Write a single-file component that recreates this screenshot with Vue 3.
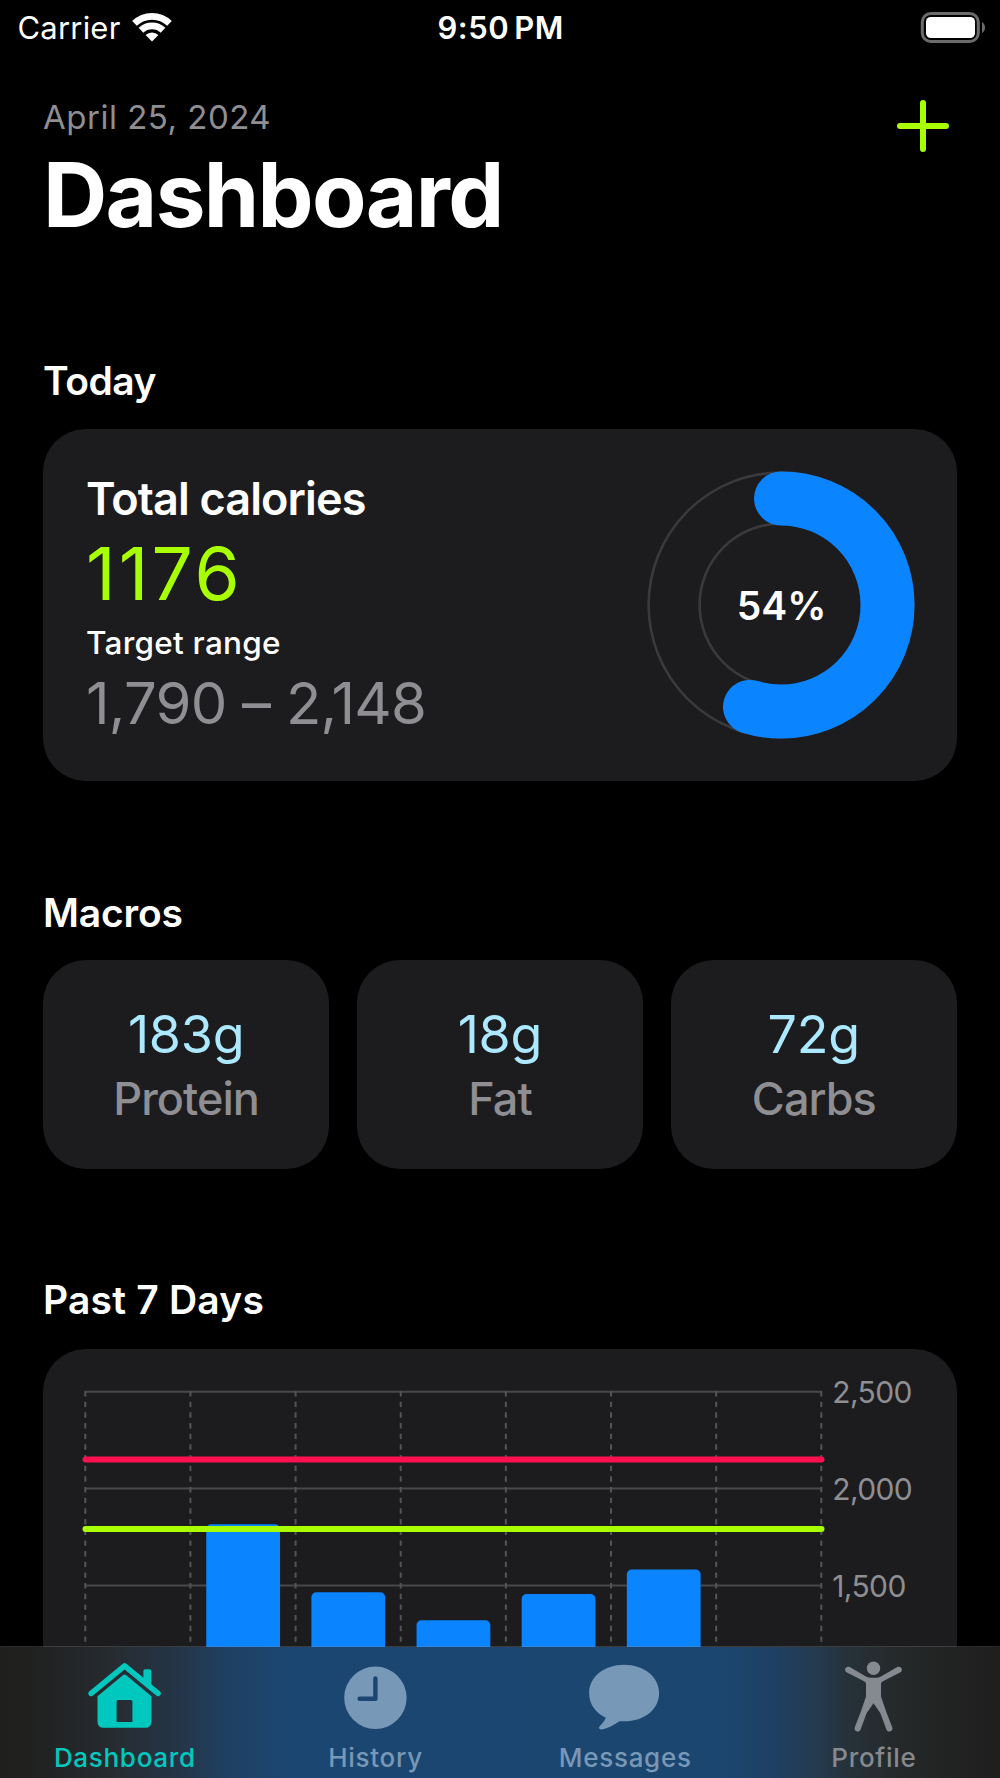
<script setup>
const macros = [
  { value: '183g', label: 'Protein' },
  { value: '18g', label: 'Fat' },
  { value: '72g', label: 'Carbs' },
]

// Chart geometry, in the chart's own coordinate space
const plotWidth = 736
const columns = 7
const step = plotWidth / columns
const gridX = Array.from({ length: columns + 1 }, (_, i) => 42.3 + i * step)
const gridY = [42.7, 139.6, 236.5]
const bars = [
  { day: 1, top: 175.3 },
  { day: 2, top: 243.3 },
  { day: 3, top: 271.3 },
  { day: 4, top: 245 },
  { day: 5, top: 220.6 },
].map((b) => ({ ...b, x: 42.3 + b.day * step + 15.8 }))
const yLabels = ['2,500', '2,000', '1,500']
</script>

<template>
  <div class="screen">
    <header class="status">
      <div class="carrier">
        <span class="carrier-name">Carrier</span>
        <svg class="wifi" width="40" height="30" viewBox="0 0 40 30">
          <g fill="none" stroke="#fff" stroke-width="6.7">
            <path d="M2.5 11.4A25.2 25.2 0 0 1 37.5 11.4" />
            <path d="M9 18.3A16 16 0 0 1 31 18.3" />
          </g>
          <path d="M20 29.5L13.6 23.100A9.3 9.3 0 0 1 26.4 23.100Z" fill="#fff" />
        </svg>
      </div>
      <div class="time">9:50<span class="pm">PM</span></div>
      <div class="power">
        <svg width="66" height="32" viewBox="0 0 66 32">
          <rect x="2.3" y="1.5" width="56" height="28" rx="8.5" fill="none" stroke="#6b6b6b" stroke-width="3" />
          <rect x="6" y="4.9" width="49" height="21.2" rx="4.8" fill="#fff" />
          <path d="M62 10Q65 12 65 15.5T62 21Z" fill="#6b6b6b" />
        </svg>
      </div>
    </header>

    <main class="content">
      <div class="top">
        <div>
          <p class="date">April 25, 2024</p>
          <h1 class="title">Dashboard</h1>
        </div>
        <svg class="plus" width="52" height="52" viewBox="0 0 52 52">
          <path d="M26 3V49M3 26H49" stroke="#a8ff00" stroke-width="6" stroke-linecap="round" />
        </svg>
      </div>

      <h2 class="heading today">Today</h2>
      <section class="card summary">
        <div class="figures">
          <div class="total-label">Total calories</div>
          <div class="total">1176</div>
          <div class="range-label">Target range</div>
          <div class="range">1,790 – 2,148</div>
        </div>
        <div class="ring">
          <svg width="268" height="268" viewBox="0 0 268 268">
            <g fill="none">
              <circle cx="134" cy="134" r="132.4" stroke="#3a3a3c" stroke-width="2.6" />
              <circle cx="134" cy="134" r="81.4" stroke="#3a3a3c" stroke-width="2.6" />
              <circle
                cx="134" cy="134" r="106.5" stroke="#0a84ff" stroke-width="54" stroke-linecap="round"
                pathLength="100" stroke-dasharray="54.7 100" transform="rotate(-90 134 134)"
              />
            </g>
          </svg>
          <span class="percent">54%</span>
        </div>
      </section>

      <h2 class="heading macros-heading">Macros</h2>
      <section class="macros">
        <div v-for="m in macros" :key="m.label" class="card macro">
          <div class="macro-value">{{ m.value }}</div>
          <div class="macro-label">{{ m.label }}</div>
        </div>
      </section>

      <h2 class="heading week-heading">Past 7 Days</h2>
      <section class="card week">
        <svg class="plot" width="790" height="429" viewBox="0 0 790 429">
          <g stroke-width="2">
            <line v-for="y in gridY" :key="y" x1="42" x2="779" :y1="y" :y2="y" stroke="#48484a" />
            <line v-for="x in gridX" :key="x" :x1="x" :x2="x" y1="42" y2="429" stroke="#545457" stroke-dasharray="5.4 5.27" />
          </g>
          <rect v-for="b in bars" :key="b.day" :x="b.x" :y="b.top" width="73.8" height="300" rx="5" fill="#0a84ff" />
          <g stroke-width="6" stroke-linecap="round">
            <line x1="42.5" x2="778.5" y1="110.5" y2="110.5" stroke="#ff114f" />
            <line x1="42.5" x2="778.5" y1="180" y2="180" stroke="#a8ff00" />
          </g>
        </svg>
        <div class="axis">
          <span v-for="l in yLabels" :key="l">{{ l }}</span>
        </div>
      </section>
    </main>

    <nav class="tabs">
      <div class="tab active">
        <svg width="76" height="72" viewBox="0.6 0 76 72">
          <g fill="none" stroke="#00c8be" stroke-width="5.6" stroke-linecap="round" stroke-linejoin="round">
            <path d="M4.8 32.4L38.2 4.800L71.6 32.4" />
          </g>
          <path d="M57 22V10.2Q57 8.3 58.9 8.3H63Q64.9 8.3 64.9 10.2V28Z" fill="#00c8be" />
          <path
            fill-rule="evenodd" fill="#00c8be"
            d="M36.5 14.2Q38.2 12.8 39.9 14.2L65 35.2V60.5Q65 66.8 58.7 66.8H17.4Q11.1 66.8 11.1 60.5V35.2ZM30.2 40.5V61H46V40.5Q46 39 44.5 39H31.7Q30.2 39 30.2 40.5Z"
          />
        </svg>
        <span>Dashboard</span>
      </div>
      <div class="tab">
        <svg width="76" height="72" viewBox="0 0 76 72">
          <circle cx="38.4" cy="36.8" r="31.2" fill="#7898b8" />
          <path d="M38.4 17.5V37.8H22.6" fill="none" stroke="#1b4670" stroke-width="4.4" stroke-linecap="round" stroke-linejoin="round" />
        </svg>
        <span class="nudge">History</span>
      </div>
      <div class="tab">
        <svg width="76" height="72" viewBox="-0.5 -0.4 76 72">
          <path
            fill="#7898b8"
            d="M37.6 3.3C57.4 3.3 72.6 15.5 72.6 31.5S58.4 59.8 37.6 59.8H32.9C27.6 63.6 20.9 67 15.6 68C12.7 68.5 11.7 66.5 13.4 64.7C15.9 62 18.2 59.2 19.3 56.3C9.2 51.3 2.6 42.7 2.6 31.5C2.6 15.5 17.8 3.3 37.6 3.3Z"
          />
        </svg>
        <span class="nudge">Messages</span>
      </div>
      <div class="tab person">
        <svg width="76" height="72" viewBox="1 0 76 72">
          <circle cx="38.5" cy="7.3" r="6.7" fill="#858a90" />
          <path
            fill="#858a90"
            d="M14.7 6L31 15.5Q33.5 16.8 36 16.8H41Q43.500 16.8 46 15.5L62.3 6C66.5 4.2 68.7 9.5 65 11.6L47.5 20.6Q46 21.4 46 23V35.5L51.2 50.7L57.4 66.8C58.2 70.8 53 71.6 51.6 69L45.4 52.3L38.5 42.3L31.6 52.3L25.4 69C24 71.6 18.8 70.8 19.6 66.8L25.8 50.7L31 35.5V23Q31 21.4 29.5 20.6L12 11.6C8.3 9.5 10.5 4.2 14.7 6Z"
          />
        </svg>
        <span>Profile</span>
      </div>
    </nav>
  </div>
</template>

<style>
body {
  background: #000;
  overflow: hidden;
}
</style>

<style scoped>
.screen {
  width: 1000px;
  height: 1778px;
  display: flex;
  flex-direction: column;
  overflow: hidden;
  background: #000;
  color: #fff;
  font-family: Inter, "Liberation Sans", sans-serif;
}
p, h1, h2 {
  margin: 0;
}
.status {
  height: 55px;
  flex: none;
  display: grid;
  grid-template-columns: 1fr auto 1fr;
  align-items: center;
  padding: 0 14px 0 17.5px;
  font-size: 31px;
  line-height: 55px;
  white-space: nowrap;
}
.carrier {
  display: flex;
  align-items: center;
  gap: 11.5px;
}
.carrier-name {
  letter-spacing: 0.2px;
}
.wifi {
  margin-top: -1px;
}
.time {
  padding-right: 2px;
  font-weight: 600;
  letter-spacing: 0.55px;
}
.pm {
  margin-left: 5px;
}
.power {
  display: flex;
  justify-content: flex-end;
}
.content {
  flex: 1;
  min-height: 0;
  overflow: hidden;
  padding: 42px 43px 0;
}
.top {
  display: flex;
  justify-content: space-between;
}
.date {
  font-size: 33px;
  line-height: 40px;
  letter-spacing: 0.5px;
  color: #8e8e93;
}
.title {
  margin-top: 8px;
  font-size: 89px;
  line-height: 100px;
  font-weight: 700;
  letter-spacing: -1.65px;
}
.plus {
  margin: 2.7px 8px 0 0;
}
.heading {
  font-size: 39px;
  line-height: 48px;
  font-weight: 600;
}
.today {
  margin: 111.5px 0 24.5px;
  letter-spacing: -0.5px;
}
.macros-heading {
  margin: 107.5px 0 23px;
  letter-spacing: -0.2px;
}
.week-heading {
  margin: 107.5px 0 25px;
  letter-spacing: 0.2px;
}
.card {
  background: #1c1c1e;
  border-radius: 43px;
}
.summary {
  height: 352px;
  display: flex;
  justify-content: space-between;
  box-sizing: border-box;
  padding: 43px 42px 0 43px;
  white-space: nowrap;
}
.total-label {
  font-size: 45px;
  line-height: 54px;
  font-weight: 600;
  letter-spacing: -0.87px;
}
.total {
  margin-top: 6px;
  font-size: 73px;
  line-height: 84px;
  letter-spacing: 3px;
  color: #a8ff00;
}
.range-label {
  margin-top: 8px;
  font-size: 31.5px;
  line-height: 38px;
  font-weight: 500;
  letter-spacing: 0.25px;
}
.range {
  margin-top: 8px;
  font-size: 58px;
  line-height: 66px;
  letter-spacing: -0.75px;
  color: #8e8e93;
}
.ring {
  display: grid;
  place-items: center;
  width: 268px;
  height: 268px;
  margin-top: -1px;
}
.ring > * {
  grid-area: 1 / 1;
}
.percent {
  padding: 2px 0 0 1px;
  font-size: 39px;
  line-height: 48px;
  font-weight: 600;
}
.macros {
  display: grid;
  grid-template-columns: repeat(3, 1fr);
  gap: 27.5px;
}
.macro {
  height: 209px;
  box-sizing: border-box;
  padding-top: 43px;
  text-align: center;
}
.macro-value {
  font-size: 52px;
  line-height: 64px;
  letter-spacing: -0.2px;
  color: #ace9ff;
}
.macro-label {
  margin-top: 5px;
  font-size: 45px;
  line-height: 54px;
  font-weight: 500;
  letter-spacing: -0.95px;
  color: #8e8e93;
}
.week {
  height: 429px;
  display: flex;
}
.plot {
  flex: none;
}
.axis {
  display: flex;
  flex-direction: column;
  padding-top: 19px;
  margin-left: -0.8px;
  font-size: 30px;
  line-height: 48px;
  gap: 49px;
  letter-spacing: -0.6px;
  color: #8e8e93;
}
.tabs {
  position: relative;
  height: 131px;
  flex: none;
  box-sizing: border-box;
  display: grid;
  grid-template-columns: repeat(4, 249.7px);
  padding-top: 14px;
  background: linear-gradient(90deg, #1f1f1e 0, #20211f 30px, #262b30 110px, #24364a 185px, #1f4062 225px, #1b4671 290px, #1b4670 720px, #1f4062 775px, #243b50 815px, #26323b 845px, #262a2c 890px, #222423 945px, #1e1e1d 1000px);
  color: #7898b8;
}
/* Hairline separator lying over the scrolled content */
.tabs::before {
  content: "";
  position: absolute;
  left: 0;
  right: 0;
  top: -1px;
  height: 1px;
  background: rgba(140, 140, 140, 0.3);
}
.tab {
  display: flex;
  flex-direction: column;
  align-items: center;
  font-size: 26px;
  line-height: 32px;
  font-weight: 500;
  letter-spacing: 0.7px;
}
.tab span {
  margin-top: 8.5px;
}
.tab .nudge {
  padding-left: 2px;
}
.active {
  color: #00c8be;
}
.person {
  color: #858a90;
}
</style>
